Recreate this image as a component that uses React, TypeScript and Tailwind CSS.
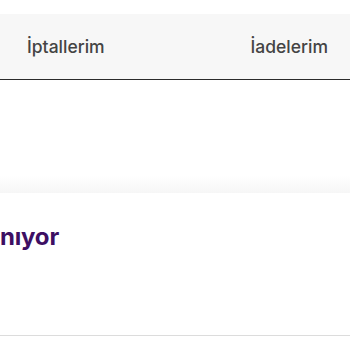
import React from 'react';

const tabs = ['İptallerim', 'İadelerim'];

const App: React.FC = () => {
  return (
    <div className="w-[350px] h-[350px] overflow-hidden bg-white" style={{ fontFamily: 'Inter, "Noto Sans", sans-serif' }}>
      <div className="h-[14px]" />
      <nav className="h-[66px] bg-[#f7f7f7] border-b-[1.5px] border-[#2b2b2b] flex items-center justify-between pl-[27px] pr-[22px]">
        {tabs.map((tab) => (
          <span key={tab} className="text-[17.5px] font-medium text-[#444] pt-[2px]">
            {tab}
          </span>
        ))}
      </nav>
      <div className="h-[95px]" />
      <div className="h-[18px] bg-gradient-to-b from-white to-[#f6f6f6]" />
      <section className="h-[143px] border-b border-[#dcdcdc] pt-[30px]">
        <span className="text-[24px] font-bold text-[#3d0f63] leading-[28px] tracking-[-0.2px]">nıyor</span>
      </section>
    </div>
  );
};

export default App;
